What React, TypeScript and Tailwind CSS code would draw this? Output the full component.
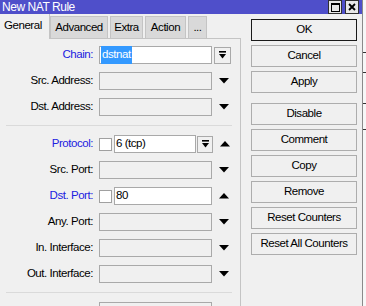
import type { ReactNode } from "react";

const font = { fontFamily: '"Liberation Sans", Arial, sans-serif' };

function DownTri() {
  return (
    <svg width="10" height="6" viewBox="0 0 10 6" className="block">
      <polygon points="0,0 10,0 5,5.5" fill="#000" />
    </svg>
  );
}

function UpTri() {
  return (
    <svg width="10" height="6" viewBox="0 0 10 6" className="block">
      <polygon points="0,5.5 10,5.5 5,0" fill="#000" />
    </svg>
  );
}

/** The little combo button: bar on top, arrow under it. */
function ComboButton({ w }: { w: string }) {
  return (
    <span className={`${w} flex h-[17px] items-center justify-center border border-[#a9a9a9] bg-[#f0f0f0]`}>
      <svg width="7" height="8" viewBox="0 0 7 8" className="block">
        <rect x="0" y="0" width="7" height="1.6" fill="#000" />
        <polygon points="0,3 7,3 3.5,7.5" fill="#000" />
      </svg>
    </span>
  );
}

function Field({ w, white, children }: { w: string; white?: boolean; children?: ReactNode }) {
  return (
    <span
      className={`${w} flex h-[18px] items-center border border-[#a9a9a9] px-[1px] text-[11.5px] ${
        white ? "bg-white" : "bg-[#f0f0f0]"
      }`}
    >
      {children}
    </span>
  );
}

function Check() {
  return <span className="h-[13px] w-[13px] border border-[#a0a0a0] bg-white" />;
}

function Row({ label, blue, children }: { label: string; blue?: boolean; children: ReactNode }) {
  return (
    <div className="flex h-[18px] items-center">
      <span className={`w-[93px] text-right text-[11.5px] ${blue ? "text-[#2020e0]" : "text-black"}`}>{label}</span>
      <div className="ml-[6px] flex items-center">{children}</div>
    </div>
  );
}

function Sep() {
  return <div className="mx-[6px] h-px w-[226px] bg-[#dadada]" />;
}

function Btn({ label, primary }: { label: string; primary?: boolean }) {
  return (
    <button
      className={`flex h-[22px] w-[106px] items-center justify-center border bg-[#f0f0f0] text-[11.5px] text-black ${
        primary ? "border-[#1a1a1a]" : "border-[#adadad]"
      }`}
    >
      {label}
    </button>
  );
}

export default function App() {
  return (
    <div className="flex h-[306px] w-[366px] overflow-hidden bg-[#f7f7f7] tracking-[-0.45px]" style={font}>
      <div className="flex w-[363px] flex-col border-r border-[#8a8a8a] bg-[#f0f0f0]">
        {/* title bar */}
        <div className="flex h-[16px] items-center bg-[#4f4fca] pl-[2px] pr-[3px]">
          <span className="text-[12px] leading-none text-white">New NAT Rule</span>
          <span className="ml-auto flex h-[14px] w-[14px] items-center justify-center border border-[#303030] bg-[#e8e8e8]">
            <span className="h-[9px] w-[9px] border border-t-2 border-black" />
          </span>
          <span className="ml-[3px] flex h-[14px] w-[14px] items-center justify-center border border-[#303030] bg-[#e8e8e8]">
            <svg width="8" height="8" viewBox="0 0 8 8" className="block">
              <path d="M1 1 L7 7 M7 1 L1 7" stroke="#000" strokeWidth="1.8" />
            </svg>
          </span>
        </div>

        <div className="flex flex-1">
          {/* tabs + panel */}
          <div className="flex w-[241px] flex-col">
            <div className="flex h-[24px] items-end text-[11.5px]">
              <div className="relative z-10 -mb-px flex h-[25px] w-[50px] items-center border-r border-[#c4c4c4] bg-[#f0f0f0] pb-[2px] pl-[4px]">
                General
              </div>
              <div className="flex h-[22px] w-[58px] items-center justify-center border border-b-0 border-[#c4c4c4] bg-[#d9d9d9]">
                Advanced
              </div>
              <div className="ml-[2px] flex h-[22px] w-[33px] items-center justify-center border border-b-0 border-[#c4c4c4] bg-[#d9d9d9]">
                Extra
              </div>
              <div className="ml-[2px] flex h-[22px] w-[41px] items-center justify-center border border-b-0 border-[#c4c4c4] bg-[#d9d9d9]">
                Action
              </div>
              <div className="ml-[2px] flex h-[22px] w-[19px] items-center justify-center border border-b-0 border-[#c4c4c4] bg-[#d9d9d9]">
                ...
              </div>
            </div>

            <div className="flex flex-1 flex-col gap-[8px] border-t border-r border-[#c4c4c4] pt-[7px]">
              <Row label="Chain:" blue>
                <Field w="w-[113px]" white>
                  <span className="bg-[#3399ff] px-[1px] text-white">dstnat</span>
                </Field>
                <span className="ml-[2px]">
                  <ComboButton w="w-[17px]" />
                </span>
              </Row>
              <Row label="Src. Address:">
                <Field w="w-[113px]" />
                <span className="ml-[7px]">
                  <DownTri />
                </span>
              </Row>
              <Row label="Dst. Address:">
                <Field w="w-[113px]" />
                <span className="ml-[7px]">
                  <DownTri />
                </span>
              </Row>

              <div className="py-[1px]">
                <Sep />
              </div>

              <Row label="Protocol:" blue>
                <Check />
                <span className="ml-[2px]">
                  <Field w="w-[82px]" white>
                    6 (tcp)
                  </Field>
                </span>
                <span className="ml-[1px]">
                  <ComboButton w="w-[16px]" />
                </span>
                <span className="ml-[7px]">
                  <UpTri />
                </span>
              </Row>
              <Row label="Src. Port:">
                <Field w="w-[113px]" />
                <span className="ml-[7px]">
                  <DownTri />
                </span>
              </Row>
              <Row label="Dst. Port:" blue>
                <Check />
                <span className="ml-[2px]">
                  <Field w="w-[98px]" white>
                    80
                  </Field>
                </span>
                <span className="ml-[7px]">
                  <UpTri />
                </span>
              </Row>
              <Row label="Any. Port:">
                <Field w="w-[113px]" />
                <span className="ml-[7px]">
                  <DownTri />
                </span>
              </Row>
              <Row label="In. Interface:">
                <Field w="w-[113px]" />
                <span className="ml-[7px]">
                  <DownTri />
                </span>
              </Row>
              <Row label="Out. Interface:">
                <Field w="w-[113px]" />
                <span className="ml-[7px]">
                  <DownTri />
                </span>
              </Row>

              <div className="py-[1px]">
                <Sep />
              </div>

              <Row label="">
                <Field w="w-[113px]" />
              </Row>
            </div>
          </div>

          {/* buttons */}
          <div className="ml-[10px] flex flex-col gap-[4px] pt-[5px]">
            <Btn label="OK" primary />
            <Btn label="Cancel" />
            <Btn label="Apply" />
            <div className="mt-[6px] flex flex-col gap-[4px]">
              <Btn label="Disable" />
              <Btn label="Comment" />
              <Btn label="Copy" />
              <Btn label="Remove" />
              <Btn label="Reset Counters" />
              <Btn label="Reset All Counters" />
            </div>
          </div>
        </div>
      </div>

      {/* sliver of the window behind */}
      <div className="flex flex-1 flex-col bg-[#f7f7f7]">
        <div className="mt-[52px] h-px bg-[#333]" />
        <div className="mt-[19px] h-px bg-[#333]" />
        <div className="mt-[30px] h-px bg-[#333]" />
        <div className="mt-[25px] h-px bg-[#333]" />
      </div>
    </div>
  );
}
